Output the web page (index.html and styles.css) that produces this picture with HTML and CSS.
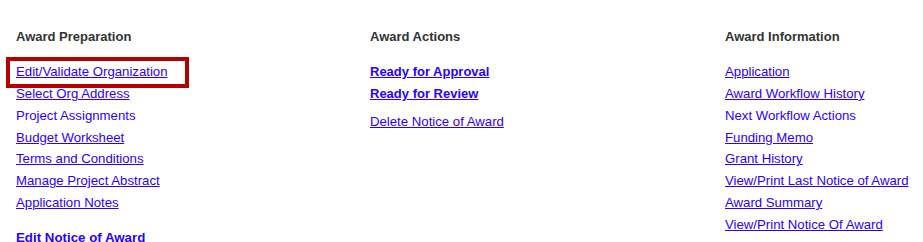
FILE: index.html
```html
<!DOCTYPE html>
<html>
<head>
<meta charset="utf-8">
<link rel="stylesheet" href="styles.css">
</head>
<body>
<div class="cols">
  <div class="col">
    <h3 class="head">Award Preparation</h3>
    <ul class="links">
      <li class="boxed"><a href="#">Edit/Validate Organization</a></li>
      <li><a href="#">Select Org Address</a></li>
      <li><span class="plain">Project Assignments</span></li>
      <li><a href="#">Budget Worksheet</a></li>
      <li><a href="#">Terms and Conditions</a></li>
      <li><a href="#">Manage Project Abstract</a></li>
      <li><a href="#">Application Notes</a></li>
    </ul>
    <div class="edit-notice"><span class="plain">Edit Notice of Award</span></div>
  </div>
  <div class="col">
    <h3 class="head">Award Actions</h3>
    <ul class="links">
      <li class="bold-link"><a href="#">Ready for Approval</a></li>
      <li class="bold-link"><a href="#">Ready for Review</a></li>
      <li class="gap"><a href="#">Delete Notice of Award</a></li>
    </ul>
  </div>
  <div class="col">
    <h3 class="head">Award Information</h3>
    <ul class="links">
      <li><a href="#">Application</a></li>
      <li><a href="#">Award Workflow History</a></li>
      <li><span class="plain">Next Workflow Actions</span></li>
      <li><a href="#">Funding Memo</a></li>
      <li><a href="#">Grant History</a></li>
      <li><a href="#">View/Print Last Notice of Award</a></li>
      <li><a href="#">Award Summary</a></li>
      <li><a href="#">View/Print Notice Of Award</a></li>
    </ul>
  </div>
</div>
</body>
</html>
```
FILE: styles.css
```css
html, body {
  margin: 0;
  padding: 0;
  background: #fff;
}
body {
  font-family: "Liberation Sans", Arial, sans-serif;
  font-size: 13.2px;
  color: #333;
}
.cols {
  display: grid;
  grid-template-columns: 354px 355px 1fr;
  padding: 29px 0 0 16px;
}
.head {
  margin: 0;
  font-size: 13px;
  font-weight: bold;
  color: #333;
  line-height: 16px;
}
.links {
  list-style: none;
  margin: 16px 0 0 0;
  padding: 0;
}
.links li {
  line-height: 21.85px;
  height: 21.85px;
}
a {
  color: #2a00ff;
  text-decoration: underline;
}
.plain {
  color: #2a00ff;
}
.boxed {
  position: relative;
}
.boxed::before {
  content: "";
  position: absolute;
  left: -10px;
  top: -4px;
  width: 183px;
  height: 31px;
  box-sizing: border-box;
  border: 4px solid #b50000;
}
.bold-link {
  font-weight: bold;
  font-size: 13px;
}
.gap {
  margin-top: 6px;
}
.edit-notice {
  margin-top: 13px;
  line-height: 22px;
  font-weight: bold;
  font-size: 13.3px;
}
```
